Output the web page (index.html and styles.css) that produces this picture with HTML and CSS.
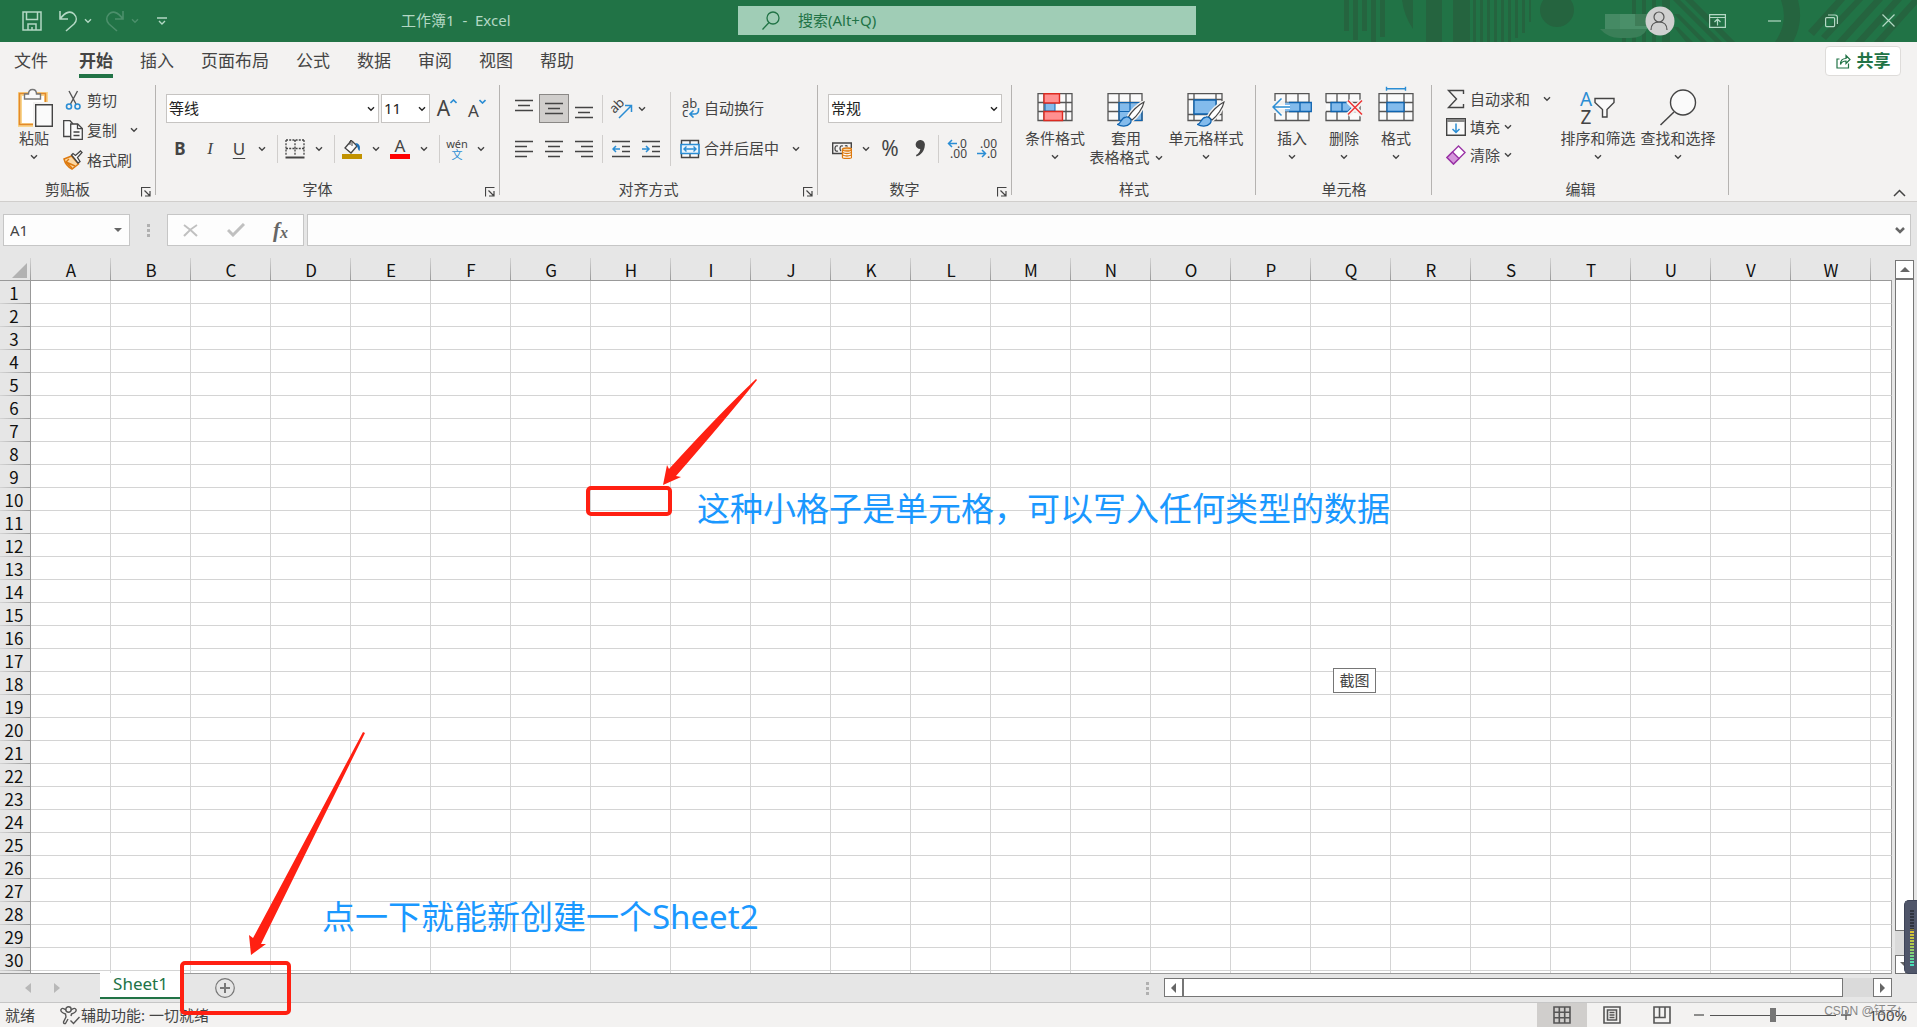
FILE: index.html
```html
<!DOCTYPE html>
<html lang="zh-CN">
<head>
<meta charset="utf-8">
<title>工作簿1 - Excel</title>
<link rel="stylesheet" href="styles.css">
</head>
<body>
<svg class="defs" aria-hidden="true">
  <symbol id="chev" viewBox="0 0 8 6"><path d="M1 1.2 4 4.2 7 1.2" fill="none" stroke="currentColor" stroke-width="1.4"/></symbol>
  <symbol id="launch" viewBox="0 0 10 10"><path d="M.5 9.500V.5H9.500M3.500 3.500 8.500 8.500M9 4V9H4" fill="none" stroke="#444" stroke-width="1.200"/></symbol>
  <symbol id="brush" viewBox="0 0 28 26"><path d="M27 1C21 4 14 11 11.500 16L15 19C20 15 26 7 27 1Z" fill="#fff" stroke="#f3f2f1" stroke-width="4"/><path d="M27 1C21 4 14 11 11.500 16L15 19C20 15 26 7 27 1Z" fill="#fff" stroke="#444" stroke-width="1.200"/><path d="M.5 23.500C4 23 4 16.500 9 16C13 15.500 15.500 19.500 13 22.500C10 26 4 25.500 .5 23.500Z" fill="#83bbec" stroke="#0f64b0" stroke-width="1.300"/></symbol>
</svg>

<header class="titlebar">
  <svg class="pattern" width="573" height="42" aria-hidden="true">
    <g fill="#25643f">
      <path d="M0 0h5v31H0zM9 0h5v40H9zM18 0h5v31h-5zM27 0h5v42h-5zM36 0h5v37h-5zM58 0h11v29Q60 16 58 0zM82 0h16v42H82zM109 0h17v42h-17z"/>
      <path d="M129 0h3v42h-3zM136 0h3v42h-3zM143 0h3v42h-3zM150 0h3v42h-3zM157 0h3v42h-3zM164 0h3v42h-3zM171 0h3v38h-3zM178 0h3v33h-3zM185 0h2v22h-2z"/>
      <circle cx="213" cy="10" r="17"/>
      <path d="M278 30h4v12h-4zM288 0h4v42h-4zM298 0h4v42h-4zM308 0h4v42h-4zM318 0h8v42h-8z"/>
      <path d="M341 0h8l42 42h-8zM329 0h7l42 42h-7zM330 14h5l28 28h-6zM330 27h4l15 15h-7z"/>
      <path d="M437 0h17q6 22-5 42h-18q14-20 6-42z"/>
      <path d="M492 0h9l-31 36-6-5zM511 0h8l-37 40-5-4zM530 0h9l-38 42h-9zM549 0h9l-38 42h-9zM568 0h5v4l-34 38h-9z"/>
    </g>
  </svg>
  <div class="title-left">
    <nav class="quick" aria-label="快速访问工具栏">
      <button class="q-save" aria-label="保存"><svg width="20" height="20" fill="none" stroke="currentColor" stroke-width="1.500"><path d="M1 1h18v18H1zM4.500 1v7.500h11V1M6 19v-6h8v6M10 16v3"/></svg></button>
      <button class="q-undo" aria-label="撤消"><svg width="20" height="22" fill="none" stroke="currentColor" stroke-width="1.600"><path d="M2 1v8h8M2 9C8 1 13 1 16 4s3 7 0 10l-8 7"/></svg></button>
      <button class="q-chev" aria-label="撤消选项"><svg width="8" height="6"><use href="#chev"/></svg></button>
      <button class="q-redo dim" aria-label="恢复"><svg width="20" height="22" fill="none" stroke="currentColor" stroke-width="1.600"><path d="M18 1v8h-8M18 9C12 1 7 1 4 4s-3 7 0 10l8 7"/></svg></button>
      <button class="q-chev dim" aria-label="恢复选项"><svg width="8" height="6"><use href="#chev"/></svg></button>
      <button class="q-more" aria-label="自定义快速访问工具栏"><svg width="10" height="9" fill="none" stroke="currentColor" stroke-width="1.400"><path d="M0 1h10M2 4l3 3 3-3"/></svg></button>
    </nav>
    <span class="doc-title">工作簿1&nbsp; -&nbsp; Excel</span>
  </div>
  <label class="search">
    <svg width="18" height="20" fill="none" stroke="#217346" stroke-width="1.300"><circle cx="11" cy="7" r="6"/><path d="M7 11.500.500 18.500"/></svg>
    <input type="text" placeholder="搜索(Alt+Q)" aria-label="搜索">
  </label>
  <div class="title-right">
    <svg class="masked" width="50" height="38" aria-hidden="true"><path d="M0 29h47q-4 9-17 9h-10Q8 38 0 29z" fill="#3a7f58"/><path d="M5 14h42v15H5z" fill="#4a8f69"/><path d="M5 14h15v15H5z" fill="#458a64"/><path d="M35 14h15v12H35z" fill="#3f7d58"/></svg>
    <button class="avatar" aria-label="帐户"><svg width="30" height="30"><circle cx="15" cy="15" r="14.500" fill="#d0d0d0"/><g fill="none" stroke="#555" stroke-width="1.200"><circle cx="14" cy="11" r="5"/><path d="M6 24c0-5 3-8 8-8s8 3 8 8"/></g></svg></button>
    <button class="win" aria-label="功能区显示选项"><svg width="17" height="14" fill="none" stroke="currentColor" stroke-width="1.200"><path d="M.6.600h15.800v12.800H.6zM.6 3.500h15.800M8.500 11.500V5.500M5.500 8l3-3 3 3"/></svg></button>
    <button class="win" aria-label="最小化"><svg width="13" height="2"><path d="M0 1h13" stroke="currentColor" stroke-width="1.200"/></svg></button>
    <button class="win" aria-label="还原"><svg width="13" height="14" fill="none" stroke="currentColor" stroke-width="1.200"><rect x=".6" y="3.600" width="9" height="9" rx="1"/><path d="M3 1h7q2.400 0 2.400 2.400V10"/></svg></button>
    <button class="win" aria-label="关闭"><svg width="13" height="13"><path d="M.5.500l12 12M12.500.500l-12 12" stroke="currentColor" stroke-width="1.200"/></svg></button>
  </div>
</header>

<nav class="tabs" aria-label="功能区选项卡">
  <button class="tab tab-file">文件</button>
  <button class="tab active">开始</button>
  <button class="tab">插入</button>
  <button class="tab">页面布局</button>
  <button class="tab">公式</button>
  <button class="tab">数据</button>
  <button class="tab">审阅</button>
  <button class="tab">视图</button>
  <button class="tab">帮助</button>
  <button class="share"><svg width="15" height="15" fill="none" stroke="#217346" stroke-width="1.200"><path d="M3.500 5H1v9h11.500V9.500M4.500 10.500c0-4 2-6 5.500-6V1.500l4 4-4 4V7C7.500 7 5.500 8 4.500 10.500z"/></svg>共享</button>
</nav>

<section class="ribbon" aria-label="功能区">
  <div class="group g-clip">
    <div class="content">
      <button class="big paste">
        <svg width="42" height="44"><path d="M7 9h26v31H7z" fill="#fff" stroke="#f8d58f" stroke-width="4"/><path d="M6.500 8.500h26v31h-26z" fill="none" stroke="#e38a2a" stroke-width="1.600"/><path d="M11.500 14v-5h4q0-4.500 4-4.500t4 4.500h4v5z" fill="#f9f9f9" stroke="#777" stroke-width="1.400"/><path d="M20 17h23v26H20z" fill="#f3f2f1"/><path d="M22.700 19.700h16.600v21.600H22.700z" fill="#fafafa" stroke="#444" stroke-width="1.400"/></svg>
        <span>粘贴</span><svg class="bc" width="8" height="6"><use href="#chev"/></svg>
      </button>
      <div class="stack">
        <button class="cmd"><svg width="20" height="20" fill="none" stroke-width="1.400"><path d="M6 1 13 14M14.500 1 7.500 14" stroke="#555"/><g stroke="#2a8dd4" stroke-width="1.600"><circle cx="6" cy="16.500" r="2.500"/><circle cx="14.500" cy="16.500" r="2.500"/></g></svg>剪切</button>
        <div class="pair">
          <button class="cmd"><svg width="20" height="20" fill="#fafafa" stroke="#444" stroke-width="1.300"><path d="M8 16.500H.7V.700H7L10 4"/><path d="M7.700 4h7l4.600 4.500v10.800H7.700z"/><path d="M14.500 4v4.700h4.800M10.500 12h6M10.500 15.500h6" fill="none"/></svg>复制</button>
          <button class="drop copy-drop" aria-label="复制选项"><svg width="8" height="6"><use href="#chev"/></svg></button>
        </div>
        <button class="cmd"><svg width="20" height="20"><path d="M8.500 6 1 9c1 4 4 8 8 10l6.500-5z" fill="#fbd9a6" stroke="#dd7a10" stroke-width="1.500"/><path d="m3 12 9 4M6 9l-3 3 6 6" fill="none" stroke="#dd7a10" stroke-width="1.400"/><path d="m8.500 5 6.500 8 2-1.500-2.500-4L19 2.500 17.500 1l-5 4.500L10 3.500z" fill="#fafafa" stroke="#444" stroke-width="1.300"/></svg>格式刷</button>
      </div>
    </div>
    <div class="foot"><span>剪贴板</span><button class="launcher" aria-label="剪贴板设置"><svg width="10" height="10"><use href="#launch"/></svg></button></div>
  </div>

  <div class="group g-font">
    <div class="content rows">
      <div class="row">
        <span class="combo c-font"><select aria-label="字体"><option>等线</option></select><svg width="8" height="6"><use href="#chev"/></svg></span>
        <span class="combo c-size"><select aria-label="字号"><option>11</option></select><svg width="8" height="6"><use href="#chev"/></svg></span>
        <button class="ib" aria-label="增大字号"><span class="grow">A</span><svg class="caret" width="7" height="5"><path d="M.5 4 3.500 1l3 3" fill="none" stroke="#2a8dd4" stroke-width="1.600"/></svg></button>
        <button class="ib" aria-label="减小字号"><span class="shrink">A</span><svg class="caret" width="7" height="5"><path d="M.5 1 3.500 4l3-3" fill="none" stroke="#2a8dd4" stroke-width="1.600"/></svg></button>
      </div>
      <div class="row font-tools">
        <button class="ib bold">B</button><button class="ib ital">I</button><button class="ib under">U</button><button class="drop" aria-label="下划线选项"><svg width="8" height="6"><use href="#chev"/></svg></button>
        <i class="bar"></i>
        <button class="ib" aria-label="边框"><svg width="20" height="20" fill="none" stroke="#444"><path d="M1 1h18M1 1v16M19 1v16M10 1v16M1 9.500h18" stroke-dasharray="2 1.200" stroke-width="1.300"/><path d="M.5 18.500h19" stroke-width="2"/></svg></button><button class="drop" aria-label="边框选项"><svg width="8" height="6"><use href="#chev"/></svg></button>
        <i class="bar"></i>
        <button class="ib" aria-label="填充颜色"><svg width="20" height="20"><path d="M9 2 3 9l6 5 6-7-5-5" fill="#fafafa" stroke="#444" stroke-width="1.300"/><path d="M8 6V2q1-2 2 0v5" fill="none" stroke="#444"/><path d="M13 4c4 0 6 3 4.500 8-2-1-1.500-5-4.500-8z" fill="#1c6fb5"/><path d="M0 15h20v5H0z" fill="#c19200"/></svg></button><button class="drop" aria-label="填充颜色选项"><svg width="8" height="6"><use href="#chev"/></svg></button>
        <button class="ib fcolor" aria-label="字体颜色"><span>A</span></button><button class="drop" aria-label="字体颜色选项"><svg width="8" height="6"><use href="#chev"/></svg></button>
        <i class="bar"></i>
        <button class="ib pinyin" aria-label="拼音"><span>wén</span><span class="wen">文</span></button><button class="drop" aria-label="拼音选项"><svg width="8" height="6"><use href="#chev"/></svg></button>
      </div>
    </div>
    <div class="foot"><span>字体</span><button class="launcher" aria-label="字体设置"><svg width="10" height="10"><use href="#launch"/></svg></button></div>
  </div>

  <div class="group g-align">
    <div class="content">
      <div class="rows">
        <div class="row">
          <button class="ib" aria-label="顶端对齐"><svg width="18" height="20" stroke="#444" stroke-width="1.300"><path d="M0 1.500h18M3 6.500h12M0 11.500h18"/></svg></button><button class="ib pressed" aria-label="垂直居中"><svg width="18" height="20" stroke="#444" stroke-width="1.300"><path d="M0 4.500h18M3 9.500h12M0 14.500h18"/></svg></button><button class="ib" aria-label="底端对齐"><svg width="18" height="20" stroke="#444" stroke-width="1.300"><path d="M0 8.500h18M3 13.500h12M0 18.500h18"/></svg></button>
          <i class="bar"></i>
          <button class="ib orient" aria-label="方向"><span>ab</span><svg width="15" height="15" fill="none" stroke="#2a8dd4" stroke-width="1.500"><path d="M1 14 13 2M7 1.500h6.500V8"/></svg></button><button class="drop tight" aria-label="方向选项"><svg width="8" height="6"><use href="#chev"/></svg></button>
        </div>
        <div class="row">
          <button class="ib" aria-label="左对齐"><svg width="18" height="18" stroke="#444" stroke-width="1.300"><path d="M0 1.500h18M0 6.500h12M0 11.500h18M0 16.500h12"/></svg></button><button class="ib" aria-label="居中"><svg width="18" height="18" stroke="#444" stroke-width="1.300"><path d="M0 1.500h18M3 6.500h12M0 11.500h18M3 16.500h12"/></svg></button><button class="ib" aria-label="右对齐"><svg width="18" height="18" stroke="#444" stroke-width="1.300"><path d="M0 1.500h18M6 6.500h12M0 11.500h18M6 16.500h12"/></svg></button>
          <i class="bar"></i>
          <button class="ib" aria-label="减少缩进"><svg width="18" height="18" fill="none" stroke="#444" stroke-width="1.300"><path d="M0 1.500h18M10 6.500h8M10 11.500h8M0 16.500h18"/><path d="M8 9H1.500M4 6 1 9l3 3" stroke="#2a8dd4" stroke-width="1.500"/></svg></button><button class="ib" aria-label="增加缩进"><svg width="18" height="18" fill="none" stroke="#444" stroke-width="1.300"><path d="M0 1.500h18M10 6.500h8M10 11.500h8M0 16.500h18"/><path d="M0 9h6.500M4 6l3 3-3 3" stroke="#2a8dd4" stroke-width="1.500"/></svg></button>
        </div>
      </div>
      <i class="tall"></i>
      <div class="rows">
        <div class="row"><button class="cmd"><span class="wrapicon" aria-hidden="true"><b>ab</b><b>c</b><svg width="11" height="10" fill="none" stroke="#2a8dd4" stroke-width="1.600"><path d="M9.500 0v2q0 4-4 4H1M4.500 2.500 1 6l3.500 3.500"/></svg></span>自动换行</button></div>
        <div class="row"><button class="cmd"><svg width="20" height="20" fill="none"><path d="M1.500 1.500h17v17h-17zM10 1.500v17" fill="#fafafa" stroke="#444" stroke-width="1.400"/><path d="M1 5.500h18v9H1z" fill="#eaf4fc" stroke="#2a8dd4" stroke-width="1.600"/><path d="M4 10h12M6.500 7.500 4 10l2.500 2.500M13.500 7.500 16 10l-2.500 2.500" stroke="#2a8dd4" stroke-width="1.400"/></svg>合并后居中</button><button class="drop merge-drop" aria-label="合并选项"><svg width="8" height="6"><use href="#chev"/></svg></button></div>
      </div>
    </div>
    <div class="foot"><span>对齐方式</span><button class="launcher" aria-label="对齐设置"><svg width="10" height="10"><use href="#launch"/></svg></button></div>
  </div>

  <div class="group g-num">
    <div class="content rows">
      <div class="row"><span class="combo c-num"><select aria-label="数字格式"><option>常规</option></select><svg width="8" height="6"><use href="#chev"/></svg></span></div>
      <div class="row">
        <button class="ib" aria-label="会计数字格式"><svg width="20" height="20" fill="none" stroke="#444"><path d="M10 14.500H.7V4h18.600v5" stroke-width="1.400"/><path d="M6 7q-3-1-3 2.500t3 2.500M11 7q-3-1-3 2.500 0 1.500 1 2.500M15.500 7.500q-1-1.500-2.500-.5" stroke-width="1.300"/><path d="M10.500 10.500v8q0 1 4.500 1t4.500-1v-8z" fill="#fff" stroke="#dd7a10" stroke-width="1.300"/><ellipse cx="15" cy="10.500" rx="4.500" ry="1.500" fill="#fbd9a6" stroke="#dd7a10" stroke-width="1.300"/><path d="M10.500 13.500q4.500 2 9 0M10.500 16q4.500 2 9 0" stroke="#dd7a10" stroke-width="1.300"/></svg></button><button class="drop" aria-label="会计格式选项"><svg width="8" height="6"><use href="#chev"/></svg></button><button class="ib pct">%</button><button class="ib" aria-label="千位分隔样式"><svg width="10" height="17"><path d="M5 0a4.600 4.600 0 0 1 4.800 5.500C9.500 11 6 15 1.500 16.500L1 15c2.500-1.300 4-3.300 4.300-6A4.500 4.500 0 1 1 5 0z" fill="#444"/></svg></button>
        <i class="bar"></i>
        <button class="ib dec" aria-label="增加小数位数"><span><svg width="10" height="9" fill="none" stroke="#2a8dd4" stroke-width="1.500"><path d="M10 4.500H1.500M5 1 1.500 4.500 5 8"/></svg>.0</span><span>.00</span></button><button class="ib dec" aria-label="减少小数位数"><span>.00</span><span><svg width="10" height="9" fill="none" stroke="#2a8dd4" stroke-width="1.500"><path d="M0 4.500h8.500M5 1l3.500 3.500L5 8"/></svg>.0</span></button>
      </div>
    </div>
    <div class="foot"><span>数字</span><button class="launcher" aria-label="数字设置"><svg width="10" height="10"><use href="#launch"/></svg></button></div>
  </div>

  <div class="group g-style">
    <div class="content">
      <button class="big w-cond"><svg width="36" height="44"><path d="M1 8.700h34v26.800H1z" fill="#fafafa"/><path d="M1 8.700h34v26.800H1zM1 17.500h34M1 26.500h34M29 8.700v26.800M7 8.700v26.800" fill="none" stroke="#555" stroke-width="1.300"/><path d="M8 18h10v8H8z" fill="#83bbec" stroke="#0f64b0"/><path d="M7 8.700h15.500V18H7zM7 26.500h18.500v9H7z" fill="#ff9090" stroke="#dc2a20" stroke-width="1.400"/></svg><span>条件格式</span><svg class="bc" width="8" height="6"><use href="#chev"/></svg></button>
      <button class="big w-table"><svg width="38" height="44"><path d="M1 8.700h34v26.800H1z" fill="#fafafa"/><path d="M12 17.500h23v18H12z" fill="#83bbec"/><path d="M1 8.700h34v26.800H1zM1 17.500h34M1 26.500h11M12 8.700v26.800M23 8.700v9" fill="none" stroke="#555" stroke-width="1.300"/><path d="M12 35.500v-18h23v18zM12 26.500h23M23 17.500v18" fill="none" stroke="#0f64b0" stroke-width="1.200"/><use href="#brush" x="10" y="16" width="28" height="26"/></svg><span>套用</span><span class="line2">表格格式<svg width="8" height="6"><use href="#chev"/></svg></span></button>
      <button class="big w-cell"><svg width="38" height="44"><path d="M1 8.700h34v26.800H1z" fill="#fafafa"/><path d="M1 8.700h34v26.800H1zM1 14.500h34M1 29.500h34M7 8.700v26.800M29 8.700v26.800" fill="none" stroke="#555" stroke-width="1.300"/><path d="M7 15h22v14H7z" fill="#83bbec" stroke="#0f64b0" stroke-width="1.400"/><use href="#brush" x="10" y="16" width="28" height="26"/></svg><span>单元格样式</span><svg class="bc" width="8" height="6"><use href="#chev"/></svg></button>
    </div>
    <div class="foot"><span>样式</span></div>
  </div>

  <div class="group g-cells">
    <div class="content">
      <button class="big w-op"><svg width="40" height="44"><path d="M3 8.700h34v26.800H3z" fill="#fafafa"/><path d="M3 8.700h34v26.800H3zM14 8.700v26.800M26 8.700v26.800M3 17.500h34M3 26.500h34" fill="none" stroke="#555" stroke-width="1.300"/><path d="M1 16h12v12H1z" fill="#f3f2f1"/><path d="M13 17.500h26.300v9H13z" fill="#83bbec"/><path d="M17 17.500h22.300v9H17M28 17.500v9" fill="none" stroke="#0f64b0" stroke-width="1.300"/><path d="M18 20H7v4h11" fill="#fff"/><path d="M18 22H1M9.500 13.500 1 22l8.500 8.500" fill="none" stroke="#2a8dd4" stroke-width="1.500"/></svg><span>插入</span><svg class="bc" width="8" height="6"><use href="#chev"/></svg></button>
      <button class="big w-op"><svg width="40" height="44"><path d="M2 8.700h34v26.800H2z" fill="#fafafa"/><path d="M2 17.500V8.700h34v26.800H2v-9M13 8.700v9M25 8.700v9M13 26.500v9M25 26.500v9M2 17.500h34M2 26.500h34" fill="none" stroke="#555" stroke-width="1.300"/><path d="M7 17.500h17l4 4.500-4 4.500H7zM18 17.500v9" fill="#83bbec" stroke="#0f64b0" stroke-width="1.300"/><path d="m24 16 14 14M38 16 24 30" stroke="#f3f2f1" stroke-width="5"/><path d="m24 15.500 14 14M38 15.500l-14 14" stroke="#e33" stroke-width="1.500"/></svg><span>删除</span><svg class="bc" width="8" height="6"><use href="#chev"/></svg></button>
      <button class="big w-op"><svg width="40" height="44"><path d="M3 8.700h34v26.800H3z" fill="#fafafa"/><path d="M3 8.700h34v26.800H3zM11 8.700v26.800M28 8.700v26.800M3 17.500h34M3 26.500h34" fill="none" stroke="#555" stroke-width="1.300"/><path d="M11 17.500h17v9H11z" fill="#83bbec" stroke="#0f64b0" stroke-width="1.300"/><path d="M10.500 3.700h19M10.500 1.700v4M29.500 1.700v4" stroke="#2a8dd4" stroke-width="1.400"/></svg><span>格式</span><svg class="bc" width="8" height="6"><use href="#chev"/></svg></button>
    </div>
    <div class="foot"><span>单元格</span></div>
  </div>

  <div class="group g-edit">
    <div class="content">
      <div class="stack">
        <div class="pair"><button class="cmd"><svg width="20" height="20" fill="none" stroke="#444" stroke-width="1.400"><path d="M17.500 5V1.500h-15l8 8.500-8 8.500h15V15"/></svg>自动求和</button><button class="drop sum-drop" aria-label="求和选项"><svg width="8" height="6"><use href="#chev"/></svg></button></div>
        <button class="cmd"><svg width="20" height="20"><path d="M.7 1.700h18.600v16.600H.7z" fill="#fafafa" stroke="#444" stroke-width="1.400"/><path d="M1 2h18v3H1z" fill="#888"/><path d="M10 6.500v9M6.500 12l3.500 3.500 3.500-3.500" fill="none" stroke="#2a8dd4" stroke-width="1.500"/></svg>填充<svg width="8" height="6"><use href="#chev"/></svg></button>
        <button class="cmd"><svg width="20" height="20"><path d="M12.500 1 19 7.500 7.500 19 1 12.500z" fill="#fff" stroke="#9a34a6" stroke-width="1.400"/><path d="M6.500 7 13 13.500 7.500 19 1 12.500z" fill="#d596dc" stroke="#9a34a6" stroke-width="1.400"/></svg>清除<svg width="8" height="6"><use href="#chev"/></svg></button>
      </div>
      <button class="big w-find"><span class="sorticon" aria-hidden="true"><span class="az"><b>A</b><b>Z</b></span><svg width="22" height="22"><path d="M1 1.500h19v4l-7 7V20H8.500v-7.500L1 5.500z" fill="#fafafa" stroke="#444" stroke-width="1.400"/></svg></span><span>排序和筛选</span><svg class="bc" width="8" height="6"><use href="#chev"/></svg></button>
      <button class="big w-find"><svg width="40" height="44"><circle cx="25" cy="17.500" r="12.500" fill="#fafafa" stroke="#444" stroke-width="1.400"/><path d="M16 27 2.500 40" stroke="#444" stroke-width="1.500"/></svg><span>查找和选择</span><svg class="bc" width="8" height="6"><use href="#chev"/></svg></button>
    </div>
    <div class="foot"><span>编辑</span></div>
  </div>
  <button class="collapse" aria-label="折叠功能区"><svg width="13" height="8"><path d="M1 7l5.500-5.500L12 7" fill="none" stroke="#444" stroke-width="1.500"/></svg></button>
</section>

<section class="formula" aria-label="编辑栏">
  <div class="namebox"><input type="text" value="A1" aria-label="名称框"><svg width="8" height="4"><path d="M0 0h8L4 4z" fill="#666"/></svg></div>
  <i class="dots"></i>
  <div class="fx">
    <button aria-label="取消"><svg width="15" height="13"><path d="M1 1q7 5 13 11M14 1Q7 5 1 12" fill="none" stroke="#c0c0c0" stroke-width="2"/></svg></button>
    <button aria-label="输入"><svg width="18" height="14"><path d="m1 7 5 5L17 1" fill="none" stroke="#c0c0c0" stroke-width="3"/></svg></button>
    <button class="fxb" aria-label="插入函数">f<small>x</small></button>
  </div>
  <div class="fbox"><input type="text" aria-label="公式"><svg width="10" height="7"><path d="m1 1 4 4 4-4" fill="none" stroke="#666" stroke-width="2.500"/></svg></div>
</section>

<main class="sheet">
  <div class="gridwrap"><table class="grid" id="grid"></table></div>
  <div class="vscroll">
    <button class="sbtn" aria-label="向上滚动"><svg width="10" height="5"><path d="M0 5h10L5 0z" fill="#666"/></svg></button>
    <div class="vthumb"></div>
    <div class="vtrack"></div>
    <button class="sbtn" aria-label="向下滚动"><svg width="10" height="5"><path d="M0 0h10L5 5z" fill="#666"/></svg></button>
  </div>
</main>

<div class="sheetbar">
  <button class="nav" aria-label="上一个工作表"><svg width="6" height="10"><path d="M6 0v10L0 5z" fill="#b8b8b8"/></svg></button>
  <button class="nav" aria-label="下一个工作表"><svg width="6" height="10"><path d="M0 0v10l6-5z" fill="#b8b8b8"/></svg></button>
  <button class="sheet-tab">Sheet1</button>
  <button class="add" aria-label="新工作表"><svg width="20" height="20" fill="none" stroke="#777"><circle cx="10" cy="10" r="9.300" stroke-width="1.200"/><path d="M10 5v10M5 10h10" stroke-width="2"/></svg></button>
  <i class="dots hdots"></i>
  <div class="hscroll">
    <button class="sbtn" aria-label="向左滚动"><svg width="5" height="10"><path d="M5 0v10L0 5z" fill="#666"/></svg></button>
    <div class="hthumb"></div>
    <div class="htrack"></div>
    <button class="sbtn" aria-label="向右滚动"><svg width="5" height="10"><path d="M0 0v10l5-5z" fill="#666"/></svg></button>
  </div>
</div>

<footer class="status">
  <span class="ready">就绪</span>
  <button class="acc"><svg width="20" height="20" fill="none" stroke="#555" stroke-width="1.400"><circle cx="8.500" cy="4.500" r="2.700"/><path d="M6 5Q2 2 1 4.500T5.500 9L6 12 3.500 17q0 2 2 1.500L8 14M11 5q4-3 5-.5T11.500 9l-.5 2M10.500 15.500l3 3 6-6.500"/></svg>辅助功能: 一切就绪</button>
  <button class="view on" aria-label="普通"><svg width="18" height="18" fill="none" stroke="#555" stroke-width="1.600"><path d="M1 1h16v16H1zM1 6.300h16M1 11.700h16M6.300 1v16M11.700 1v16"/></svg></button>
  <button class="view" aria-label="页面布局"><svg width="18" height="18" fill="none" stroke="#555" stroke-width="1.600"><path d="M1 1h16v16H1zM4.500 4h9v10h-9zM6.500 6.500h5M6.500 9h5M6.500 11.500h5"/></svg></button>
  <button class="view" aria-label="分页预览"><svg width="18" height="18" fill="none" stroke="#555" stroke-width="1.600"><path d="M1 1h16v16H1zM1 11.500h11V1M6.500 1v10.500"/></svg></button>
  <button class="zoom-btn" aria-label="缩小"><svg width="10" height="10"><path d="M0 5h10" stroke="#555" stroke-width="1.300"/></svg></button>
  <input class="zoom" type="range" min="0" max="100" value="50" aria-label="缩放">
  <button class="zoom-btn" aria-label="放大"><svg width="10" height="10"><path d="M0 5h10M5 0v10" stroke="#555" stroke-width="1.300"/></svg></button>
  <button class="pctval">100%</button>
</footer>

<svg class="arrow arrow-cell" width="100" height="108" aria-hidden="true"><path d="M3 107 7 87 9 91Q60 35 96 1L97 2Q65 42 16 98L21 99z" fill="#ff2012"/></svg>
<svg class="arrow arrow-add" width="120" height="224" aria-hidden="true"><path d="M4 223 2 203 6 206 116 0 118 1 14 212 19 212z" fill="#ff2012"/></svg>
<div class="mark mark-cell"></div>
<div class="mark mark-add"></div>
<p class="note note-cell">这种小格子是单元格，可以写入任何类型的数据</p>
<p class="note note-add">点一下就能新创建一个Sheet2</p>
<div class="tip" role="tooltip">截图</div>
<div class="meter"><i></i></div>
<span class="credit">CSDN @钰子t</span>
<script src="grid.js"></script>
</body>
</html>
```
FILE: grid.js
```js
// Builds the empty worksheet: lettered columns, numbered rows.
const letters = 'ABCDEFGHIJKLMNOPQRSTUVW'.split('');
const rowCount = 30;
const corner = '<th class="corner"><svg width="16" height="15" aria-hidden="true"><path d="M15 0v15H0z" fill="#b2b2b2"/></svg></th>';
const cols = '<colgroup><col class="rowhead">' + letters.map(() => '<col class="data">').join('') + '<col></colgroup>';
const head = '<thead><tr>' + corner + letters.map(l => `<th scope="col">${l}</th>`).join('') + '<td></td></tr></thead>';
const cells = '<td></td>'.repeat(letters.length + 1);
let body = '';
for (let r = 1; r <= rowCount; r++) body += `<tr><th scope="row">${r}</th>${cells}</tr>`;
body += `<tr><th></th>${cells}</tr>`;
document.getElementById('grid').innerHTML = cols + head + '<tbody>' + body + '</tbody>';
```
FILE: styles.css
```css
* { box-sizing: border-box; }
body {
  margin: 0;
  height: 100vh;
  display: flex;
  flex-direction: column;
  position: relative;
  overflow: hidden;
  background: #e6e6e6;
  color: #444;
  font: 15px/19px "Noto Sans", "Noto Sans CJK SC", sans-serif;
}
button, input, select { font: inherit; color: inherit; border: 0; padding: 0; margin: 0; background: none; border-radius: 0; outline: 0; }
button { display: flex; align-items: center; justify-content: center; white-space: nowrap; }
svg { flex: none; display: block; }
.defs { position: absolute; width: 0; height: 0; }

/* title bar */
.titlebar { position: relative; flex: none; height: 42px; display: grid; grid-template-columns: 738fr 458fr 721fr; background: #217346; color: #b3d8c4; }
.pattern { position: absolute; right: 0; top: 0; }
.title-left, .title-right { display: flex; align-items: center; position: relative; min-width: 0; }
.quick { display: flex; align-items: center; padding-left: 22px; height: 41px; }
.q-save { width: 20px; margin-right: 16px; }
.q-undo, .q-redo { width: 20px; }
.q-chev { width: 20px; margin-right: 7px; }
.dim { color: #4c8f6b; }
.q-more { width: 20px; }
.doc-title { margin: 0 auto 0 229px; white-space: nowrap; line-height: 41px; height: 42px; }
.search { display: flex; align-items: center; height: 29px; margin-top: 6px; padding-left: 24px; gap: 18px; background: #a0cdb6; position: relative; }
.search input { flex: 1; min-width: 0; color: #217346; }
.search input::placeholder { color: #217346; opacity: 1; }
.title-right { justify-content: flex-end; height: 41px; }
.masked { align-self: flex-start; margin-right: -5px; }
.avatar { margin-right: 14px; width: 30px; position: relative; }
.win { width: 57px; height: 41px; }

/* ribbon tabs */
.tabs { flex: none; height: 43px; display: flex; align-items: flex-start; gap: 27px; padding: 4px 16px 0 14px; background: #f3f2f1; font-size: 17px; line-height: 28px; }
.tab { height: 32px; padding-top: 2px; line-height: 26px; border-bottom: 4px solid transparent; }
.tab-file { margin-right: 4px; }
.tab.active { font-weight: 700; border-color: #217346; }
.share { margin-left: auto; width: 76px; height: 30px; gap: 6px; background: #fff; border: 1px solid #dedcda; border-radius: 4px; color: #217346; font-weight: 700; }

/* ribbon */
.ribbon { flex: none; display: flex; height: 117px; background: #f3f2f1; border-bottom: 1px solid #d0cecc; }
.group { flex: none; display: flex; flex-direction: column; background: linear-gradient(#b5b3b1, #b5b3b1) no-repeat right top / 1px 110px; }
.content { display: flex; height: 95px; }
.foot { display: flex; height: 20px; text-align: center; }
.foot span { flex: 1; }
.launcher { width: 21px; padding-top: 4px; }
.g-clip { width: 156px; }
.g-font { width: 344px; }
.g-align { width: 318px; }
.g-num { width: 194px; }
.g-style { width: 244px; }
.g-cells { width: 176px; }
.g-edit { width: 297px; }
.g-clip .content { padding-left: 13px; }
.g-font .content { padding-left: 9px; }
.g-align .content { padding-left: 9px; }
.g-num .content { padding-left: 9px; }
.g-style .content { padding-left: 9px; }
.g-cells .content { padding-left: 10px; }
.g-edit .content { padding-left: 14px; }
.big { flex-direction: column; justify-content: flex-start; align-self: flex-start; line-height: 19px; }
.big .bc { margin-top: 6px; }
.paste { width: 42px; margin-right: 8px; }
.w-cond { width: 68px; }
.w-table { width: 74px; }
.w-cell { width: 86px; }
.w-op { width: 52px; }
.w-find { width: 80px; }
.line2 { display: flex; align-items: center; gap: 5px; }
.stack { display: flex; flex-direction: column; align-items: flex-start; }
.g-edit .stack { width: 112px; }
.pair { display: flex; }
.cmd { height: 29px; gap: 4px; }
.g-clip .cmd { height: 30px; }
.g-edit .cmd { height: 28px; }
.drop { width: 18px; height: 29px; }
.tight { width: 12px; }
.copy-drop { margin-left: 8px; }
.merge-drop, .sum-drop { margin-left: 8px; }
.sum-drop { height: 28px; }
.rows { display: flex; flex-direction: column; gap: 11px; padding-top: 9px; }
.row { display: flex; align-items: center; height: 29px; }
.ib { width: 30px; height: 29px; }
.bar { width: 1px; height: 28px; margin: 0 3px; background: #d0cecc; }
.font-tools .bar { margin: 0 2px 0 6px; }
.tall { width: 1px; height: 74px; margin: 7px 9px 0 4px; background: #d0cecc; }
.combo { position: relative; height: 29px; border: 1px solid #c6c4c2; background: #fff; margin-left: 1px; color: #222; }
.combo select { appearance: none; width: 100%; height: 27px; padding: 0 20px 0 2px; }
.combo svg { position: absolute; right: 3px; top: 11px; pointer-events: none; }
.c-font { width: 213px; }
.c-size { width: 49px; margin: 0 2px 0 2px; }
.c-num { width: 174px; }
.grow { font-size: 21px; }
.shrink { font-size: 17px; padding-top: 3px; }
.caret { align-self: flex-start; margin-top: 5px; }
.bold { font-weight: 700; font-size: 17px; }
.ital { font-style: italic; font-family: "Liberation Serif", serif; font-size: 17px; }
.under { width: 28px; font-size: 17px; text-decoration: underline; text-underline-offset: 3px; }
.fcolor span { width: 20px; height: 20px; line-height: 14px; font-size: 17px; border-bottom: 5px solid #f00; }
.pinyin { flex-direction: column; font-size: 11px; line-height: 11px; }
.wen { color: #2a8dd4; }
.pressed { background: #d0cecc; border: 1px solid #8a8886; }
.orient { position: relative; }
.orient span { position: absolute; left: 3px; top: 2px; transform: rotate(-45deg); font-size: 13px; }
.orient svg { margin: 6px 0 0 8px; }
.wrapicon { position: relative; width: 20px; height: 20px; display: grid; grid-template-columns: auto 11px; grid-template-rows: 9px 11px; line-height: 9px; text-align: left; padding-left: 2px; font-size: 13px; }
.wrapicon b { font-weight: 400; }
.wrapicon b:first-child { grid-column: 1 / 3; }
.pct { font-size: 21px; }
.dec { flex-direction: column; align-items: flex-end; padding-right: 5px; font-size: 12px; line-height: 10px; }
.dec span { display: flex; align-items: center; }
.sorticon { display: flex; height: 44px; padding-top: 2px; gap: 2px; align-items: center; }
.az { display: flex; flex-direction: column; font-size: 19px; line-height: 18px; }
.az b { font-weight: 400; }
.az b:first-child { color: #2a8dd4; }
.collapse { align-self: flex-end; margin: 0 11px 4px auto; }

/* formula bar */
.formula { flex: none; display: flex; align-items: center; height: 56px; padding: 0 6px 0 3px; }
.namebox, .fx, .fbox { display: flex; align-items: center; height: 32px; border: 1px solid #c6c6c6; background: #fdfdfd; }
.namebox { width: 127px; padding: 0 7px 0 6px; }
.namebox input, .fbox input { flex: 1; min-width: 0; }
.dots { width: 3px; height: 13px; margin: 0 17px; background: repeating-linear-gradient(#b0b0b0 0 3px, transparent 3px 5px); }
.fx { width: 137px; margin-right: 3px; }
.fx button { flex: 1; height: 30px; }
.fxb { font: italic 700 21px/24px "Liberation Serif", serif; color: #666; }
.fxb small { font-size: 16px; padding-top: 6px; }
.fbox { flex: 1; padding-right: 5px; }

/* worksheet */
.sheet { flex: 1; min-height: 0; display: flex; }
.gridwrap { flex: 1; min-width: 0; overflow: hidden; border-bottom: 1px solid #999; }
.grid { width: 100%; table-layout: fixed; border-collapse: separate; border-spacing: 0; color: #111; font: 17px/22px "Noto Sans CJK SC", sans-serif; }
.rowhead { width: 31px; }
.data { width: 80px; }
.grid td, .grid th { padding: 0; height: 23px; font-weight: 400; }
.grid tbody td { background: #fff; border: solid #d4d4d4; border-width: 0 1px 1px 0; }
.grid tbody td:last-child { border-right-color: #999; }
.grid thead th, .grid thead td { border-bottom: 1px solid #999; }
.grid thead th { padding-top: 2px; line-height: 20px; background: linear-gradient(#d4d4d4, #999) no-repeat right / 1px 100%; }
.grid tbody th { border-right: 1px solid #999; padding-right: 2px; background: linear-gradient(90deg, #d4d4d4, #999) no-repeat bottom / 100% 1px; }
.corner svg { margin-left: 12px; }
.vscroll { flex: none; width: 19px; margin: 2px 3px 0 3px; display: flex; flex-direction: column; }
.sbtn { flex: none; width: 19px; height: 19px; border: 1px solid #767676; background: #fff; }
.vthumb { flex: 652; border: 1px solid #767676; background: #fff; }
.vtrack { flex: 24; background: #dadada; }

/* sheet tabs */
.sheetbar { flex: none; height: 28px; display: flex; align-items: center; padding-right: 25px; }
.nav { width: 29px; height: 26px; }
.nav:first-child { margin-left: 13px; }
.sheet-tab { align-self: flex-start; position: relative; width: 81px; height: 26px; margin: -1px 34px 0 29px; padding-bottom: 2px; background: #fff; border-bottom: 2px solid #217346; color: #217346; font-size: 17px; line-height: 20px; }
.hdots { margin: 0 15px 0 auto; }
.hscroll { width: 38vw; display: flex; height: 19px; margin-bottom: 1px; }
.hthumb { flex: 660; border: 1px solid #767676; background: #fff; }
.htrack { flex: 30; background: #dadada; }

/* status bar */
.status { flex: none; height: 25px; display: flex; align-items: center; background: #f3f2f1; border-top: 1px solid #c6c6c6; padding-right: 10px; line-height: 24px; }
.ready { padding-left: 5px; }
.acc { margin: 0 auto 0 25px; gap: 1px; }
.view { width: 50px; height: 24px; }
.view.on { background: #d0cecc; }
.zoom-btn { width: 10px; }
.view + .zoom-btn { margin-left: 7px; }
.zoom { appearance: none; width: 126px; height: 16px; margin: 0 5px 0 6px; background: linear-gradient(#555, #555) no-repeat center / 100% 1px; }
.zoom::-webkit-slider-thumb { appearance: none; width: 6px; height: 14px; background: #767676; }
.pctval { margin-left: 18px; }

/* annotations over the window */
.arrow, .mark, .note, .tip, .meter, .credit { position: absolute; margin: 0; }
.arrow-cell { left: 660px; top: 378px; }
.arrow-add { left: 247px; top: 732px; }
.mark { border: 4px solid #ff2012; border-radius: 5px; }
.mark-cell { left: 586px; top: 486px; width: 86px; height: 30px; }
.mark-add { left: 180px; top: 961px; width: 111px; height: 54px; }
.note { color: #1a98ff; font-size: 33px; line-height: 48px; white-space: nowrap; }
.note-cell { left: 697px; top: 485px; }
.note-add { left: 322px; top: 893px; }
.tip { left: 1333px; top: 668px; width: 43px; height: 25px; border: 1px solid #767676; background: #fff; text-align: center; line-height: 23px; }
.meter { right: 0; top: 900px; width: 13px; height: 74px; padding: 9px 3px 8px 5px; background: #50566a; border: 1px solid #3e4458; border-right: 0; border-radius: 5px 0 0 5px; }
.meter i { display: block; height: 56px; background: repeating-linear-gradient(transparent 0 2px, #50566a 2px 3px), linear-gradient(#30343f 0 19px, #e0c030 20px, #a8c850 36px, #40e0c0); }
.credit { right: 16px; bottom: 6px; color: #888; font: 12px/20px "Liberation Sans", "Noto Sans CJK SC", sans-serif; pointer-events: none; }
```
